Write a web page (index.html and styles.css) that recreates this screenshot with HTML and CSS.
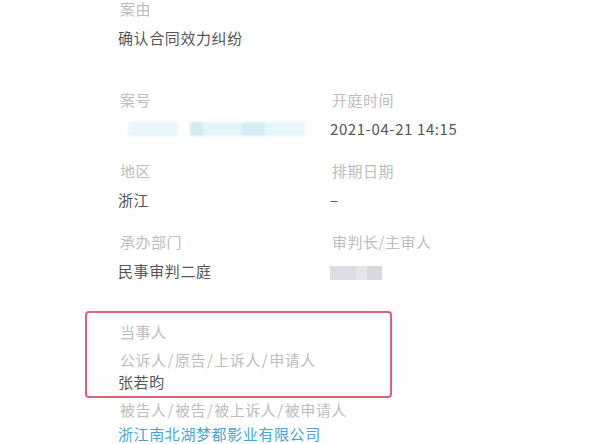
FILE: index.html
```html
<!DOCTYPE html>
<html lang="zh">
<head>
<meta charset="utf-8">
<link rel="stylesheet" href="styles.css">
</head>
<body>
<main class="page">
  <section class="field first">
    <div class="label">案由</div>
    <div class="value">确认合同效力纠纷</div>
  </section>

  <div class="row">
    <section class="field">
      <div class="label">案号</div>
      <div class="value"><span class="mask">
        <span class="blk c1"></span><span class="blk c2"></span>
      </span></div>
    </section>
    <section class="field">
      <div class="label">开庭时间</div>
      <div class="value">2021-04-21 14:15</div>
    </section>
  </div>

  <div class="row">
    <section class="field">
      <div class="label">地区</div>
      <div class="value">浙江</div>
    </section>
    <section class="field">
      <div class="label">排期日期</div>
      <div class="value">–</div>
    </section>
  </div>

  <div class="row">
    <section class="field">
      <div class="label">承办部门</div>
      <div class="value">民事审判二庭</div>
    </section>
    <section class="field">
      <div class="label">审判长/主审人</div>
      <div class="value"><span class="blk judge"></span></div>
    </section>
  </div>

  <section class="parties">
    <div class="highlight">
      <div class="label">当事人</div>
      <div class="label sub">公诉人<span class="sl">/</span>原告<span class="sl">/</span>上诉人<span class="sl">/</span>申请人</div>
      <div class="value tight">张若昀</div>
    </div>
    <div class="label sub2">被告人<span class="sl">/</span>被告<span class="sl">/</span>被上诉人<span class="sl">/</span>被申请人</div>
    <div class="value link">浙江南北湖梦都影业有限公司</div>
  </section>
</main>
</body>
</html>
```

FILE: styles.css
```css
html, body {
  margin: 0;
  padding: 0;
  background: #ffffff;
}
body {
  width: 600px;
  height: 444px;
  overflow: hidden;
  font-family: "Noto Sans CJK SC", "Noto Sans", sans-serif;
}
.page {
  padding-left: 118px;
}
.label {
  font-size: 15px;
  line-height: 20px;
  height: 20px;
  color: #bdbdbd;
  letter-spacing: 0.5px;
  padding-left: 2px;
  white-space: nowrap;
}
.value {
  font-size: 15px;
  line-height: 20px;
  height: 20px;
  color: #555555;
  letter-spacing: 0.6px;
  margin-top: 9px;
  white-space: nowrap;
}
.field.first .label {
  line-height: 18px;
  height: 18px;
}
.field.first .value {
  margin-top: 10px;
}
.field.first {
  margin-bottom: 42px;
}
.row {
  display: flex;
  margin-bottom: 22px;
}
.row .field {
  width: 212px;
}
.row:nth-of-type(4) .value {
  margin-top: 10px;
}
.row:last-of-type {
  margin-bottom: 30px;
}
.mask {
  display: flex;
  align-items: center;
  height: 20px;
  padding-left: 10px;
  gap: 12px;
  filter: blur(1px);
}
.blk {
  display: inline-block;
  height: 14px;
  vertical-align: middle;
}
.c1 {
  width: 50px;
  background: #e8f7fb;
}
.c2 {
  width: 115px;
  background: linear-gradient(90deg, #d2ebf3 0 11%, #e4f5fa 11% 45%, #d4edf4 45% 65%, #e6f6fa 65% 100%);
}
.judge {
  width: 52px;
  height: 14px;
  margin-left: 0;
  background: linear-gradient(90deg, #dcdde2 0 50%, #e6e6ea 50% 72%, #d9dadf 72% 100%);
  filter: blur(0.6px);
}
.highlight {
  margin-left: -33px;
  width: 272px;
  border: 2px solid #e65f78;
  border-radius: 4px;
  padding: 9px 0 4px 31px;
}
.sub {
  margin-top: 8px;
}
.sl {
  margin: 0 1px;
}
.value.tight {
  margin-top: 2px;
}
.sub2 {
  margin-top: 2px;
}
.value.link {
  margin-top: 4px;
  color: #46a6d8;
}
```
